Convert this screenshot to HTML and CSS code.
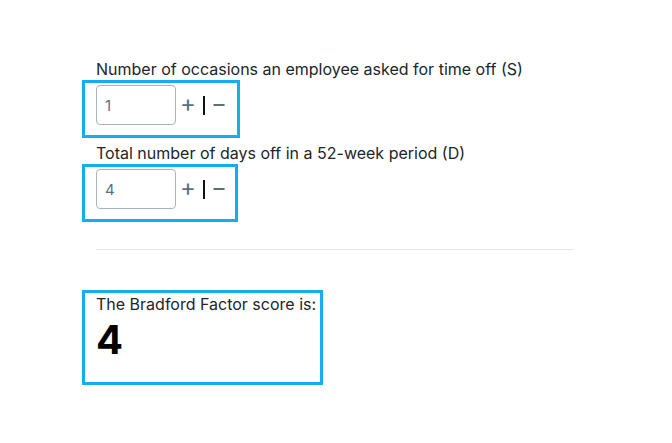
FILE: index.html
```html
<!DOCTYPE html>
<html>
<head>
<meta charset="utf-8">
<link rel="stylesheet" href="styles.css">
</head>
<body>
<main class="calc">
  <div class="field">
    <label class="label" for="s">Number of occasions an employee asked for time off (S)</label>
    <div class="box stepper">
      <input id="s" class="num" type="text" value="1">
      <span class="btn">+</span>
      <span class="sep"></span>
      <span class="btn">−</span>
    </div>
  </div>
  <div class="field">
    <label class="label" for="d">Total number of days off in a 52-week period (D)</label>
    <div class="box stepper narrow">
      <input id="d" class="num" type="text" value="4">
      <span class="btn">+</span>
      <span class="sep"></span>
      <span class="btn">−</span>
    </div>
  </div>
  <hr class="rule">
  <div class="box result">
    <div class="label">The Bradford Factor score is:</div>
    <div class="score">4</div>
  </div>
</main>
</body>
</html>
```
FILE: styles.css
```css
html, body { margin: 0; padding: 0; background: #fff; }
body { font-family: Inter, "Noto Sans", sans-serif; color: #212529; }
.calc { padding: 58px 0 0 82px; width: 491px; }
.field { margin-bottom: 4px; }
.label { display: block; font-size: 16px; line-height: 22px; padding-left: 14px; color: #212529; }
.box { border: 3px solid #14adf0; box-sizing: border-box; }
.stepper { display: inline-flex; align-items: center; padding: 2px 10px 10px 11px; }
.stepper.narrow { padding-right: 8px; }
.num { width: 80px; height: 40px; box-sizing: border-box; border: 1px solid #a9b4bd; border-radius: 4px; padding: 0 8px; font: 15px Inter, sans-serif; color: #5a6f7f; outline: none; }
.btn { font-size: 24px; line-height: 1; color: #5a6f7f; width: 16px; text-align: center; margin-top: -3px; }
.stepper .btn:first-of-type { margin-left: 4px; }
.sep { width: 2px; height: 19px; background: #111; margin: 0 6px 0 7px; }
.rule { border: 0; border-top: 1px solid #e4e7ea; margin: 27px 0 40px 14px; }
.result { display: inline-block; padding: 0 4px 17px 11px; }
.result .label { padding-left: 0; margin-top: 0; }
.score { font-size: 40px; font-weight: 700; line-height: 50px; color: #000; margin-top: 0; }
```
